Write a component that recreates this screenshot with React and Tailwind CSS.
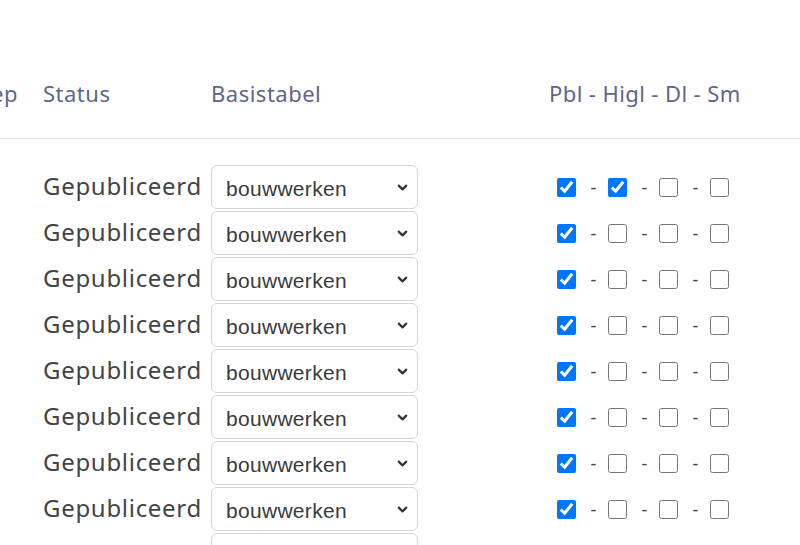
import { ChevronDown } from "lucide-react";

const rows = [
  [true, true, false, false],
  [true, false, false, false],
  [true, false, false, false],
  [true, false, false, false],
  [true, false, false, false],
  [true, false, false, false],
  [true, false, false, false],
  [true, false, false, false],
  [true, false, false, false],
];

function Check({ checked }) {
  return (
    <input
      type="checkbox"
      defaultChecked={checked}
      className="w-[19px] h-[19px] m-0 shrink-0"
    />
  );
}

function Dash() {
  return <span className="w-[32px] pl-[3px] text-center text-[18px] text-[#444]">-</span>;
}

function App() {
  return (
    <div
      className="w-[800px] h-[545px] overflow-hidden bg-white"
      style={{ fontFamily: "'Noto Sans', 'Liberation Sans', sans-serif" }}
    >
      {/* header */}
      <div className="h-[139px] border-b border-[#e4e4e4] flex items-center pt-[49px] text-[22px] tracking-[0.5px] text-[#5e6689]">
        <div className="w-[43px] flex justify-end pr-[25px] whitespace-nowrap">Groep</div>
        <div className="w-[168px]">Status</div>
        <div className="w-[338px]">Basistabel</div>
        <div className="whitespace-nowrap tracking-[0.4px]">Pbl - Higl - Dl - Sm</div>
      </div>

      {/* rows */}
      <div className="pt-[26px] flex flex-col gap-[2px]">
        {rows.map((checks, i) => (
          <div key={i} className="flex items-center h-[44px]">
            <div className="w-[43px]" />
            <div className="w-[168px] text-[24px] tracking-[0.7px] text-[#444] -mt-[3px] whitespace-nowrap">Gepubliceerd</div>
            <div className="w-[346px]">
              <div className="relative w-[207px] h-[44px]">
                <select
                  defaultValue="bouwwerken"
                  className="appearance-none w-full h-full border border-[#d6d6d6] rounded-[6px] bg-white pl-[14px] pt-[3px] text-[21px] tracking-[0.3px] text-[#3a3a3a]"
                  style={{ fontFamily: "'Liberation Sans', Arial, sans-serif" }}
                >
                  <option>bouwwerken</option>
                </select>
                <ChevronDown
                  className="absolute right-[8px] top-[15px] w-[15px] h-[15px] text-[#333] pointer-events-none"
                  strokeWidth={3.5}
                />
              </div>
            </div>
            <div className="flex items-center">
              <Check checked={checks[0]} />
              <Dash />
              <Check checked={checks[1]} />
              <Dash />
              <Check checked={checks[2]} />
              <Dash />
              <Check checked={checks[3]} />
            </div>
          </div>
        ))}
      </div>
    </div>
  );
}

export default App;
